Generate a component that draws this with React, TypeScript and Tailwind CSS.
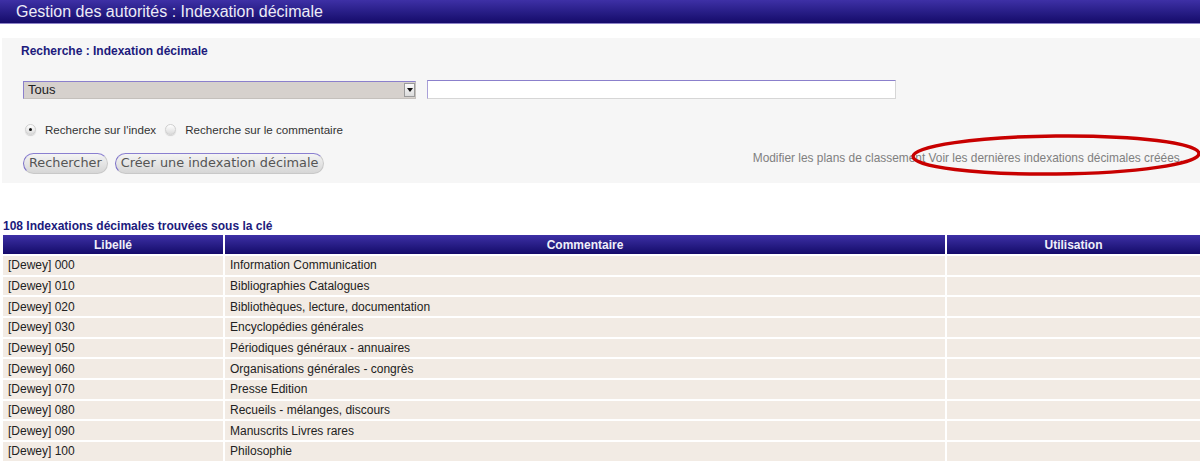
const rows: [string, string][] = [
  ["[Dewey] 000", "Information Communication"],
  ["[Dewey] 010", "Bibliographies Catalogues"],
  ["[Dewey] 020", "Bibliothèques, lecture, documentation"],
  ["[Dewey] 030", "Encyclopédies générales"],
  ["[Dewey] 050", "Périodiques généraux - annuaires"],
  ["[Dewey] 060", "Organisations générales - congrès"],
  ["[Dewey] 070", "Presse Edition"],
  ["[Dewey] 080", "Recueils - mélanges, discours"],
  ["[Dewey] 090", "Manuscrits Livres rares"],
  ["[Dewey] 100", "Philosophie"],
];

function Radio({ checked, label }: { checked?: boolean; label: string }) {
  return (
    <label className="flex items-center gap-[9px]">
      <span className="flex h-[11px] w-[11px] items-center justify-center rounded-full border border-[#d0d0d0] bg-gradient-to-b from-[#ffffff] to-[#dcdcdc] shadow-[0_1px_1px_rgba(0,0,0,0.15)]">
        {checked ? <span className="h-[3px] w-[3px] rounded-full bg-[#111]" /> : null}
      </span>
      <span className="text-[11.6px]">{label}</span>
    </label>
  );
}

function PillButton({ children }: { children: string }) {
  return (
    <button
      type="button"
      className="h-[21px] rounded-full border border-[#c8c8c8] border-l-[#7a6ec6] border-t-[#8a7fd0] bg-gradient-to-b from-[#f4f4f4] to-[#d6d6d6] px-[5px] font-['DejaVu_Sans',sans-serif] text-[12.85px] leading-none text-[#555]"
    >
      {children}
    </button>
  );
}

export default function App() {
  return (
    <div className="h-[464px] w-[1200px] overflow-hidden bg-white font-['Liberation_Sans',Arial,sans-serif] text-[12px] text-[#222]">
      {/* bandeau titre */}
      <div className="flex h-[24px] items-center border-b border-[#8c82c8] bg-gradient-to-b from-[#3e30a6] to-[#150a6a] pl-[16px] text-[16px] text-[#ecebf7]">
        Gestion des autorités : Indexation décimale
      </div>

      {/* bloc recherche */}
      <div className="relative ml-[2px] mt-[14px] h-[145px] bg-[#f6f6f6] pl-[19px]">
        <h2 className="pt-[6px] text-[12px] font-bold leading-[14px] text-[#201a7c]">Recherche : Indexation décimale</h2>

        <div className="mt-[22px] flex items-center gap-[11px] pl-[2px]">
          <div className="flex h-[18px] w-[393px] items-center justify-between border border-[#c4c0bc] border-l-[#8b80cc] border-t-[#8b80cc] bg-[#d6d1cd] pl-[4px] text-[13px] text-[#222]">
            <span>Tous</span>
            <span className="flex h-[14px] w-[11px] items-center justify-center border border-[#9a9a9a] bg-gradient-to-b from-[#fafafa] to-[#dcdcdc]">
              <span className="h-0 w-0 border-x-[3px] border-t-[4px] border-x-transparent border-t-[#111]" />
            </span>
          </div>
          <div className="h-[19px] w-[469px] border border-[#d6d6d6] border-t-[#8b80cc] border-l-[#a9a0d8] bg-white" />
        </div>

        <div className="mt-[22px] flex items-center gap-[9px] pl-[4px] text-[#333]">
          <Radio checked label="Recherche sur l'index" />
          <Radio label="Recherche sur le commentaire" />
        </div>

        <div className="mt-[15px] flex items-start justify-between pl-[2px] pr-[17px]">
          <div className="flex gap-[7px]">
            <PillButton>Rechercher</PillButton>
            <PillButton>Créer une indexation décimale</PillButton>
          </div>
          <span className="relative mt-[-3px] text-[11.9px] text-[#808080]">
            Modifier les plans de classement Voir les dernières indexations décimales créées.
            {/* annotation rouge */}
            <svg
              className="pointer-events-none absolute left-[156px] top-[-18px]"
              width="294"
              height="46"
              viewBox="0 0 294 46"
            >
              <ellipse
                cx="147"
                cy="23"
                rx="143"
                ry="19"
                fill="none"
                stroke="#c80000"
                strokeWidth="3.5"
                transform="rotate(-0.6 147 23)"
              />
            </svg>
          </span>
        </div>
      </div>

      {/* résultats */}
      <div className="mt-[36px] pl-[3px] font-bold leading-[14px] text-[#201a7c]">
        108 Indexations décimales trouvées sous la clé
      </div>
      <div className="pl-[1px]">
        <table className="w-[1201px] table-fixed border-separate border-spacing-[2px]">
          <thead>
            <tr className="h-[19px]">
              <th className="w-[220px] bg-gradient-to-b from-[#3e30a6] to-[#150a6a] p-0 text-center font-bold text-[#f0effa]">Libellé</th>
              <th className="w-[720px] bg-gradient-to-b from-[#3e30a6] to-[#150a6a] p-0 text-center font-bold text-[#f0effa]">Commentaire</th>
              <th className="bg-gradient-to-b from-[#3e30a6] to-[#150a6a] p-0 text-center font-bold text-[#f0effa]">Utilisation</th>
            </tr>
          </thead>
          <tbody>
            {rows.map(([libelle, commentaire]) => (
              <tr key={libelle} className="h-[18.67px]">
                <td className="bg-[#f2ebe4] py-0 pl-[5px] leading-[14px]">{libelle}</td>
                <td className="bg-[#f2ebe4] py-0 pl-[5px] leading-[14px]">{commentaire}</td>
                <td className="bg-[#f2ebe4] p-0" />
              </tr>
            ))}
          </tbody>
        </table>
      </div>
    </div>
  );
}
